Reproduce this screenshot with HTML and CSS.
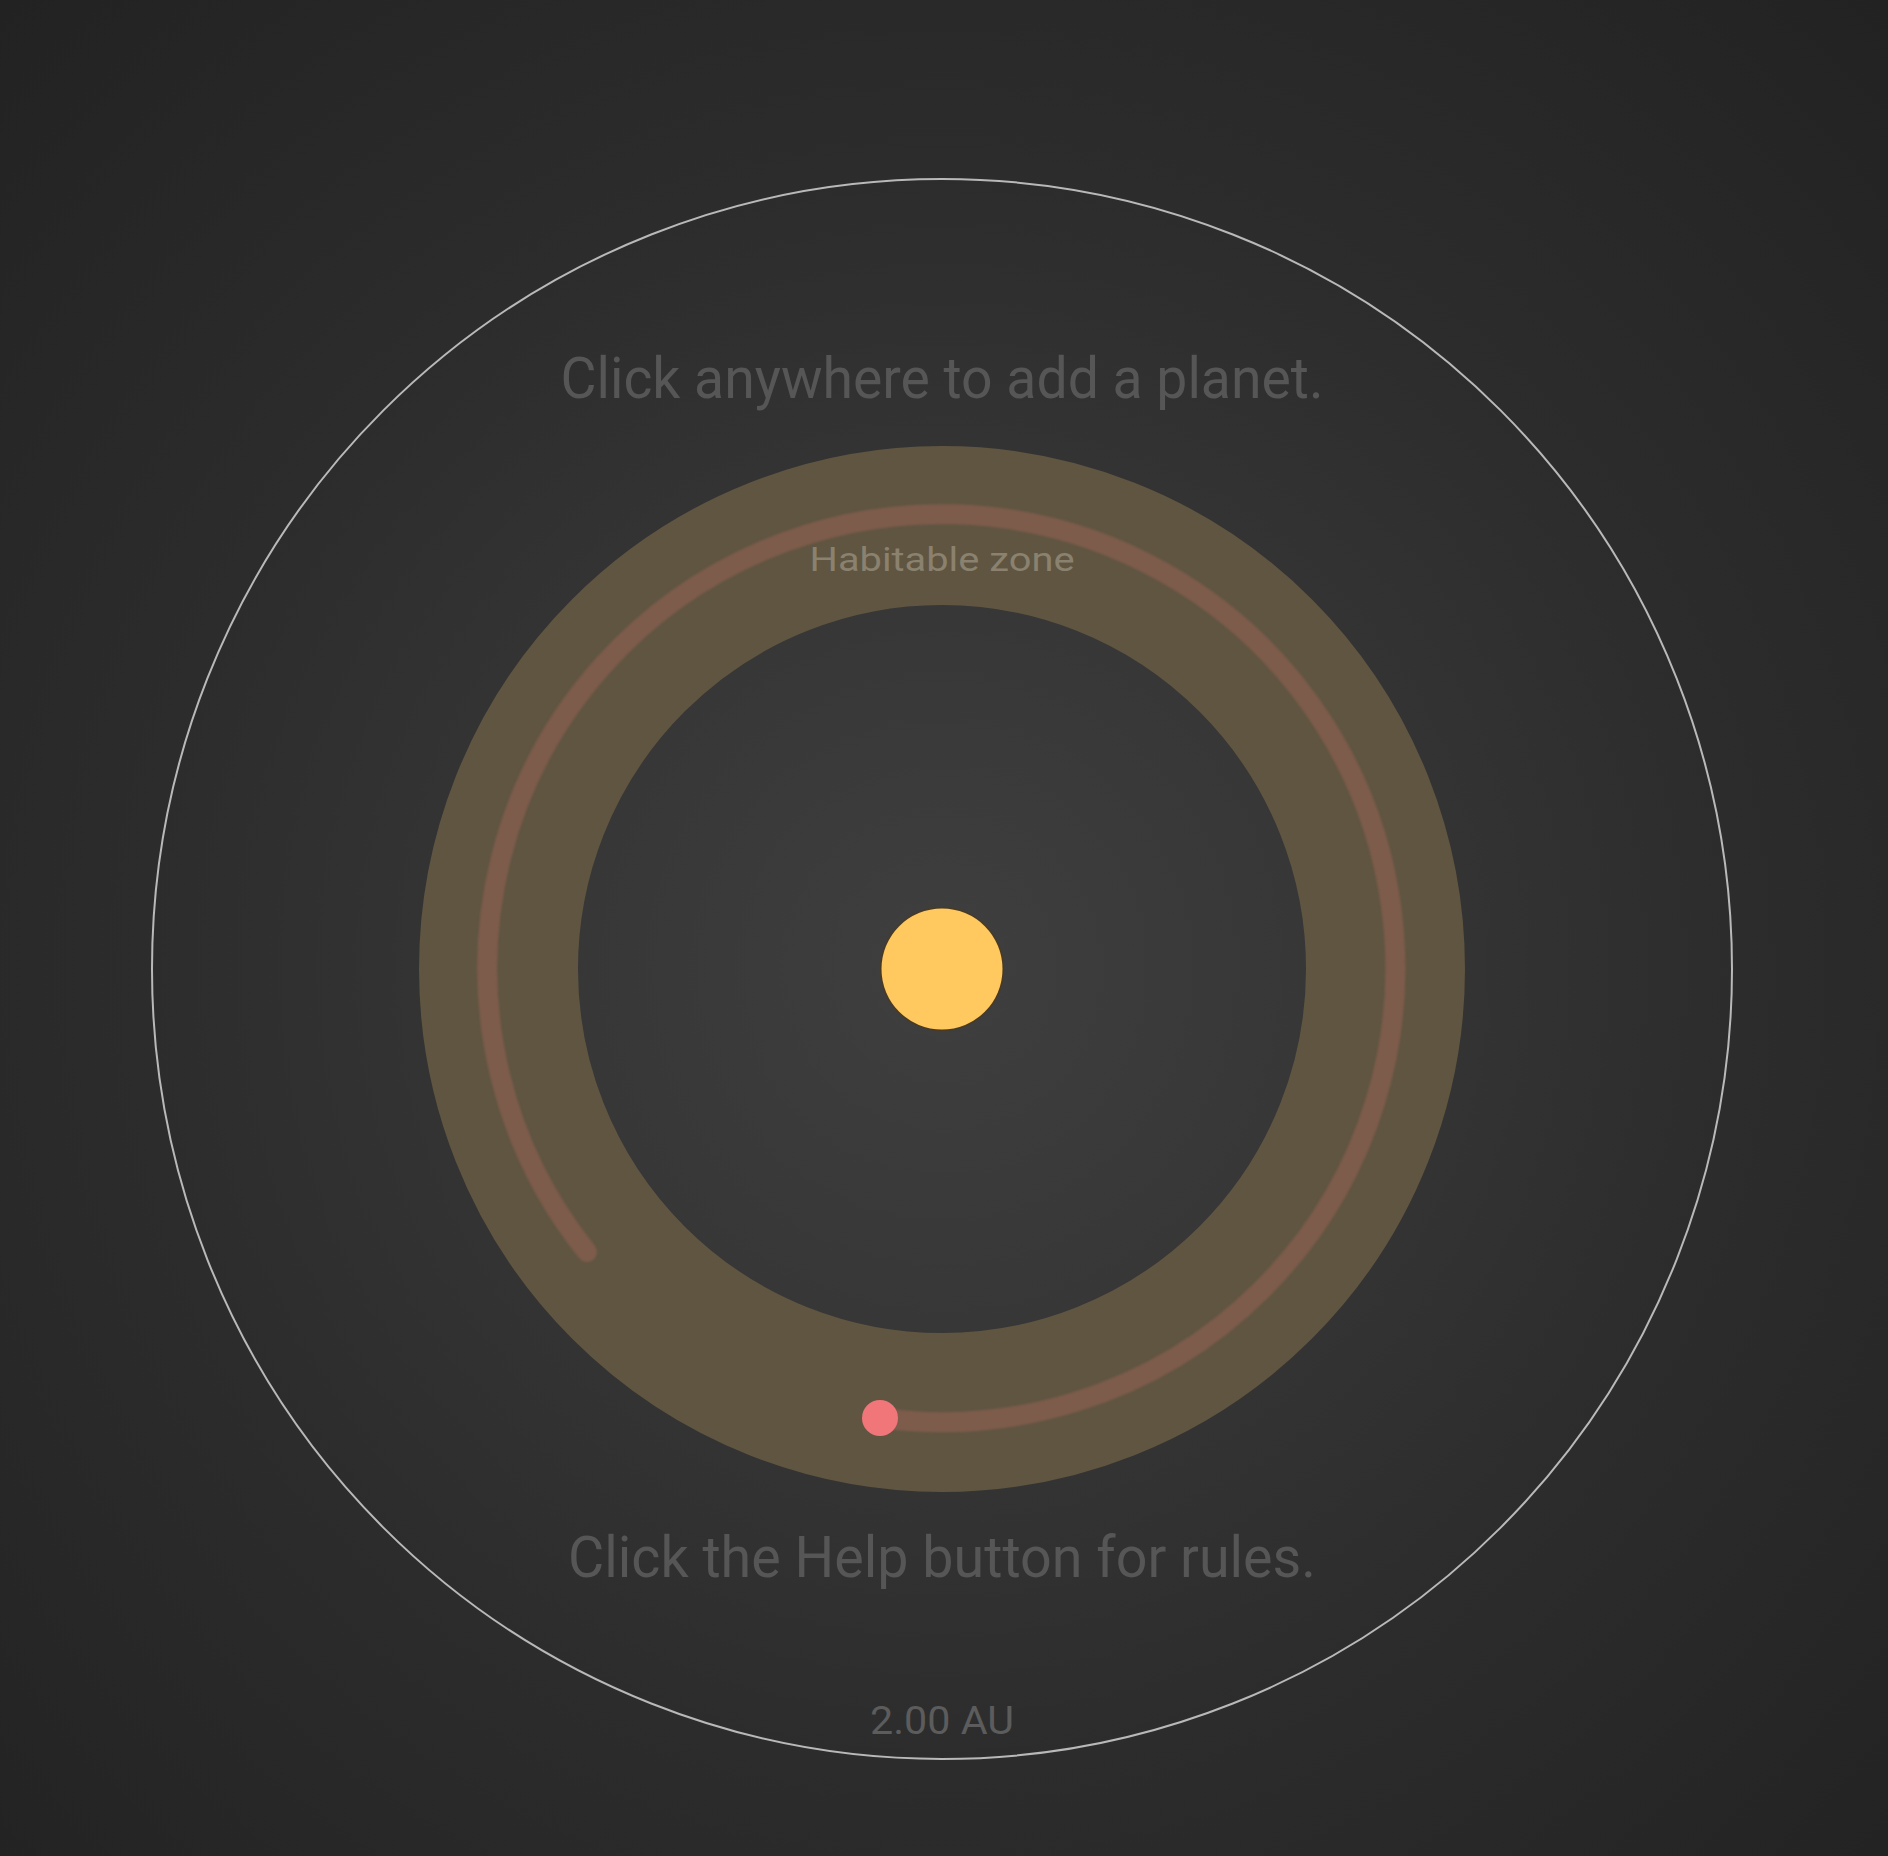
FILE: index.html
```html
<!DOCTYPE html>
<html lang="en">
<head>
<meta charset="utf-8">
<title>Planets</title>
<link rel="stylesheet" href="styles.css">
</head>
<body>
<main class="stage">
  <svg class="system" width="1888" height="1856" viewBox="0 0 1888 1856">
    <defs>
      <filter id="soft" x="-5%" y="-5%" width="110%" height="110%">
        <feGaussianBlur stdDeviation="1.2"/>
      </filter>
    </defs>
    <circle class="boundary" cx="942" cy="969" r="790"/>
    <text class="hint" x="942" y="398" text-anchor="middle" textLength="763" lengthAdjust="spacingAndGlyphs">Click anywhere to add a planet.</text>
    <circle class="zone" cx="942" cy="969" r="443.5"/>
    <path class="trail" filter="url(#soft)" d="M 880 1418 A 454 454 0 1 0 587 1252"/>
    <text class="zone-label" x="942" y="571" text-anchor="middle" textLength="265" lengthAdjust="spacingAndGlyphs">Habitable zone</text>
    <circle class="sun-halo" cx="942" cy="969" r="62"/>
    <circle class="sun" cx="942" cy="969" r="60.5"/>
    <circle class="planet" cx="880" cy="1418" r="18"/>
    <text class="hint" x="942" y="1577" text-anchor="middle" textLength="748" lengthAdjust="spacingAndGlyphs">Click the Help button for rules.</text>
    <text class="scale" x="942" y="1734" text-anchor="middle" textLength="144" lengthAdjust="spacingAndGlyphs">2.00 AU</text>
  </svg>
</main>
</body>
</html>
```
FILE: styles.css
```css
html, body {
  margin: 0;
  padding: 0;
  width: 1888px;
  height: 1856px;
  overflow: hidden;
}
body {
  background: radial-gradient(circle at 942px 969px, #3f3f3f 0px, #353535 450px, #2c2c2c 800px, #222222 1350px);
  font-family: Roboto, "Noto Sans", sans-serif;
}
.stage {
  width: 1888px;
  height: 1856px;
}
.system {
  display: block;
}
.boundary {
  fill: none;
  stroke: #b9b9b9;
  stroke-width: 2;
}
.zone {
  fill: none;
  stroke: #5f5541;
  stroke-width: 159;
}
.trail {
  fill: none;
  stroke: #7e5b4b;
  stroke-width: 20;
  stroke-linecap: round;
}
.sun-halo {
  fill: #4a3a22;
}
.sun {
  fill: #ffc960;
}
.planet {
  fill: #f07679;
}
.hint {
  fill: #565656;
  font-size: 58px;
  font-weight: 400;
}
.zone-label {
  fill: #8a816f;
  font-size: 34px;
}
.scale {
  fill: #5c5c5c;
  font-size: 38px;
}
```
